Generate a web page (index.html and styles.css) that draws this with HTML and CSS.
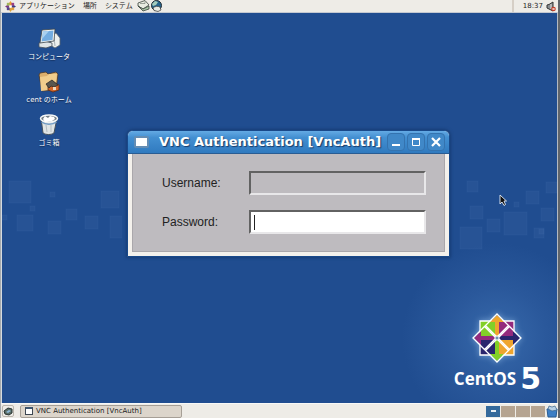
FILE: index.html
```html
<!DOCTYPE html>
<html lang="ja">
<head>
<meta charset="utf-8">
<title>CentOS 5</title>
<link rel="stylesheet" href="styles.css">
</head>
<body>
<header class="panel panel-top">
  <nav class="menus">
    <svg class="menu-logo" viewBox="0 0 12 12" aria-hidden="true">
      <path fill="#e89a31" d="M6 0l2 3-2 3-2-3z"/><path fill="#7d3b86" d="M0 6l3-2 3 2-3 2z"/>
      <path fill="#3b3b85" d="M12 6L9 4 6 6l3 2z"/><path fill="#d9a33a" d="M6 12l2-3-2-3-2 3z"/>
      <path fill="#a1b85b" d="M2 2h3v3H2z"/><path fill="#9c3e85" d="M7 2h3v3H7z"/>
      <path fill="#54468c" d="M2 7h3v3H2z"/><path fill="#e3a040" d="M7 7h3v3H7z"/>
      <circle cx="6" cy="6" r="1.5" fill="#fff"/>
    </svg>
    <button class="menu">アプリケーション</button>
    <button class="menu">場所</button>
    <button class="menu">システム</button>
  </nav>
  <button class="launcher" aria-label="Mail">
    <svg viewBox="0 0 13 12"><path d="M1 3l7-2.500 4 4.500-6 4-5-3z" fill="#e8ece2" stroke="#3b443d" stroke-width=".8"/><path d="M1 6l5 5 6-2V6L6 9z" fill="#a9c7a8" stroke="#3b443d" stroke-width=".8"/><path d="M3 3.500l5 0 0-2" fill="none" stroke="#667169" stroke-width=".6"/></svg>
  </button>
  <button class="launcher" aria-label="Web">
    <svg viewBox="0 0 13 12"><circle cx="6.500" cy="5.500" r="5" fill="#27658d" stroke="#222b31"/><path d="M2 4l3-3 3 1-2 3-3 1z" fill="#a4cbbb"/><path d="M3 8c2-2 5-2 7-1l1 3-3 1.500-4-1z" fill="#e8e9e3" stroke="#333" stroke-width=".7"/></svg>
  </button>
  <div class="status">
    <time>18:37</time>
    <svg class="volume" viewBox="0 0 10 11" role="img" aria-label="Volume muted"><path d="M1 4l2-.500L7 1v9L3 8 1 7z" fill="#8a8f92" stroke="#333"/><path d="M5 3v5" stroke="#ddd"/><circle cx="7.500" cy="8" r="2.300" fill="#c43c28"/><path d="M6.500 7l2 2m0-2l-2 2" stroke="#fff" stroke-width=".8"/></svg>
  </div>
</header>

<main class="desktop">
  <svg class="tiles tiles-left" viewBox="0 0 120 80" aria-hidden="true">
    <rect x="7" y="16" width="22" height="22"/><rect x="48" y="27" width="5" height="5"/><rect x="28" y="41" width="5" height="5"/>
    <rect x="15" y="50" width="16" height="16"/><rect x="64" y="44" width="11" height="11"/><rect x="46" y="56" width="13" height="13"/>
    <rect x="83" y="51" width="13" height="13"/><rect x="99" y="26" width="18" height="17"/><rect x="108" y="51" width="22" height="22"/><rect x="0" y="50" width="5" height="5"/>
  </svg>
  <svg class="tiles tiles-right" viewBox="0 0 100 80" aria-hidden="true">
    <rect x="10" y="3" width="11" height="11"/><rect x="69" y="13" width="13" height="13"/><rect x="89" y="4" width="11" height="11"/>
    <rect x="57" y="24" width="5" height="5"/><rect x="13" y="28" width="13" height="13"/><rect x="84" y="30" width="13" height="13"/>
    <rect x="30" y="41" width="13" height="13"/><rect x="47" y="34" width="23" height="23"/><rect x="3" y="49" width="22" height="22"/>
    <rect x="77" y="50" width="10" height="10"/><rect x="82" y="51" width="5" height="5"/>
  </svg>

  <div class="shortcuts">
    <button class="shortcut">
      <svg viewBox="0 0 24 22"><path d="M14 7l5-2 4 5v7l-5 3-5-3z" fill="#edf0ee" stroke="#596570" stroke-width=".8"/><path d="M17 9l1 9" stroke="#a9b0b4"/><path d="M2 15l6-2 7 2v3l-6 2-7-1z" fill="#dfe4e6" stroke="#46515c" stroke-width=".8"/><path d="M5 2l13-1-1 12-14 2z" fill="#f5f6f3" stroke="#3c464e" stroke-width=".8"/><path d="M6 3.500l10.500-1-1 9.500-11 1.500z" fill="#73ace0"/><path d="M6 3.500l6-.500-7 8z" fill="#a9d0ef"/></svg>
      <span>コンピュータ</span>
    </button>
    <button class="shortcut">
      <svg viewBox="0 0 24 22"><path d="M2 4l1-2 6-1 2 2 8-2 2 2-2 16-14 1z" fill="#dcae6b" stroke="#49372a" stroke-width=".8"/><path d="M3 6l7-1 2-2 8 0-2 15-14 2z" fill="#f1cd8c"/><path d="M11 14l5-3 6 3v5l-6 2-5-2z" fill="#d36629" stroke="#582b1a" stroke-width=".8"/><path d="M9 13l6-4 6 5-4 2-3-1-2 2z" fill="#59564e" stroke="#302c28" stroke-width=".8"/><path d="M16 16h3v3h-3z" fill="#f2d9bd"/></svg>
      <span>cent のホーム</span>
    </button>
    <button class="shortcut">
      <svg viewBox="0 0 24 22"><path d="M4 4l2 15c3 2 8 2 11 0l3-15z" fill="#dfe4e5" stroke="#46515c"/><ellipse cx="12" cy="4.500" rx="8.500" ry="3.500" fill="#727d84" stroke="#f5f7f7" stroke-width="1.500"/><path d="M6 5l2-3 3 2 2-2 4 1 1 2-3 2-7 1z" fill="#fff"/><path d="M4.500 8c4 3 11 3 15 0" stroke="#719bc4" stroke-width="1.500" fill="none"/><path d="M9 11l1 7m4-7v7" stroke="#b4bdc1"/></svg>
      <span>ゴミ箱</span>
    </button>
  </div>

  <section class="window" role="dialog" aria-labelledby="window-title">
    <div class="titlebar">
      <button class="window-menu" aria-label="Window menu"></button>
      <h1 id="window-title">VNC Authentication [VncAuth]</h1>
      <div class="controls">
        <button aria-label="Minimize"><svg viewBox="0 0 16 16"><path d="M4 11h8" stroke="#fff" stroke-width="2"/></svg></button>
        <button aria-label="Maximize"><svg viewBox="0 0 16 16"><path d="M4 5h8" stroke="#fff" stroke-width="2"/><path d="M4.500 5v6.500h7V5" stroke="#fff" fill="none"/></svg></button>
        <button aria-label="Close"><svg viewBox="0 0 16 16"><path d="M4 4l8 8m0-8l-8 8" stroke="#fff" stroke-width="2.200"/></svg></button>
      </div>
    </div>
    <form class="auth">
      <label for="username">Username:</label>
      <input id="username" type="text" disabled>
      <label for="password">Password:</label>
      <div class="entry"><input id="password" type="password"><i class="caret"></i></div>
    </form>
  </section>

  <div class="brand">
    <svg viewBox="0 0 50 50" aria-hidden="true">
      <g stroke="#fff" stroke-width="1.300">
        <path fill="#82cf28" d="M8 8h16v16H8z"/><path fill="#942a7d" d="M26 8h16v16H26z"/>
        <path fill="#29256d" d="M8 26h16v16H8z"/><path fill="#efa52e" d="M26 26h16v16H26z"/>
      </g>
      <path fill="#efa52e" d="M25 2l7 7h-5v15h-4V9h-5z"/><path fill="#942a7d" d="M2 25l7-7v5h15v4H9v5z"/>
      <path fill="#29256d" d="M48 25l-7-7v5H26v4h15v5z"/><path fill="#82cf28" d="M25 48l7-7h-5V26h-4v15h-5z"/>
      <g stroke="#fff" stroke-width="1.300" fill="none">
        <path d="M25 1l11.500 11.500L25 24 13.500 12.500zM25 26l11.500 11.500L25 49 13.500 37.500zM1 25l11.500-11.500L24 25 12.500 36.500zM26 25l11.500-11.500L49 25 37.500 36.500z"/>
      </g>
      <circle cx="25" cy="25" r="2" fill="#6d91b4" stroke="#fff" stroke-width=".8"/>
    </svg>
    <div class="wordmark"><span>CentOS</span><strong>5</strong></div>
  </div>

  <svg class="pointer" viewBox="0 0 8 12" aria-hidden="true"><path d="M1 1v9l2-2 2 3.500 1.500-1L5 7h2.500z" fill="#111" stroke="#e5ecf5" stroke-width=".9"/></svg>
</main>

<footer class="panel panel-bottom">
  <button class="show-desktop" aria-label="Show desktop"><svg viewBox="0 0 10 9"><path d="M1 4l4-3 4 1v4L6 8 2 7z" fill="#596e67" stroke="#293432"/><path d="M3 5l3-2 2 1-3 2z" fill="#8cb7d5"/></svg></button>
  <button class="task"><i class="task-icon"></i>VNC Authentication [VncAuth]</button>
  <div class="workspaces">
    <button class="current" aria-label="Workspace 1"></button>
    <button aria-label="Workspace 2"></button>
    <button aria-label="Workspace 3"></button>
    <button aria-label="Workspace 4"></button>
  </div>
  <button class="trash" aria-label="Trash"><svg viewBox="0 0 12 13"><path d="M1 4h10l-1 8H2z" fill="#3c7fc6" stroke="#285c94"/><path d="M2 4l1-3 3 1 3-1 2 4-5 1z" fill="#b8d0e4" stroke="#39648b" stroke-width=".7"/></svg></button>
</footer>
</body>
</html>
```
FILE: styles.css
```css
* { box-sizing: border-box; }

body {
  margin: 0;
  min-height: 100vh;
  display: flex;
  flex-direction: column;
  border-left: 1px solid #a5aaae;
  border-right: 2px solid #60656b;
  background: #eeece7;
  color: #222;
  font-family: "DejaVu Sans", "Noto Sans CJK JP", sans-serif;
}

button {
  margin: 0;
  padding: 0;
  border: 0;
  background: none;
  color: inherit;
  font: inherit;
}

svg { display: block; }

.panel {
  display: flex;
  align-items: center;
  background: #eeece7;
}

.panel-top {
  height: 13px;
  padding: 0 2px 0 4px;
  font-size: 7px;
  line-height: 12px;
  border-bottom: 1px solid #c4c9d1;
}

.menus {
  display: flex;
  align-items: center;
  gap: 8px;
  margin-right: 4px;
}

.menu-logo {
  width: 11px;
  height: 11px;
  margin-right: -5px;
}

.launcher svg {
  width: 13px;
  height: 12px;
}

.status {
  display: flex;
  align-items: center;
  gap: 3px;
  margin-left: auto;
  padding-left: 9px;
  border-left: 2px solid #d6cfc6;
}

.volume {
  width: 10px;
  height: 11px;
}

.desktop {
  position: relative;
  flex: 1;
  overflow: hidden;
  border-left: 1px solid #d5dbe0;
  border-right: 1px solid #b4bac2;
  background:
    radial-gradient(circle at calc(100% - 60px) calc(100% - 65px), #386aac 0, #2a589b 50px, transparent 95px),
    #204d90;
}

.tiles {
  position: absolute;
  height: 80px;
  fill: rgba(90, 135, 190, .12);
  stroke: rgba(110, 150, 200, .08);
}

.tiles-left { top: 152px; left: 0; width: 120px; }
.tiles-right { top: 165px; right: 0; width: 100px; }

.shortcuts {
  display: flex;
  flex-direction: column;
  gap: 8px;
  width: 80px;
  margin: 15px 0 0 7px;
}

.shortcut {
  display: flex;
  flex-direction: column;
  align-items: center;
  gap: 2px;
  color: #fff;
  font-size: 7px;
  line-height: 11px;
  text-shadow: 0 1px 1px #10264b;
}

.shortcut svg {
  width: 24px;
  height: 22px;
}

.window {
  position: absolute;
  top: 117px;
  left: 125px;
  width: 323px;
  border: 1px solid #19498a;
  border-radius: 6px 6px 0 0;
  background: #f4f1ec;
  box-shadow: 0 0 3px 1px #173d76;
}

.titlebar {
  display: flex;
  align-items: center;
  height: 23px;
  padding: 0 4px 0 6px;
  border-radius: 5px 5px 0 0;
  border-bottom: 1px solid #295c93;
  background: linear-gradient(#64aae4 0, #438fd1 30%, #307abf 100%);
}

.window-menu {
  width: 15px;
  height: 12px;
  border: 2px solid #648db4;
  border-radius: 2px;
  background: #fff;
}

.titlebar h1 {
  flex: 1;
  margin: 0 0 0 10px;
  color: #fff;
  font-size: 13px;
  line-height: 20px;
  white-space: nowrap;
  text-shadow: 1px 1px 1px #183b68;
}

.controls {
  display: flex;
  gap: 2px;
}

.controls button {
  width: 18px;
  height: 18px;
  border: 1px solid #3473af;
  border-radius: 4px;
  background: #4088c8;
}

.controls svg {
  width: 16px;
  height: 16px;
}

.auth {
  display: grid;
  grid-template-columns: 75px 1fr;
  align-items: center;
  gap: 15px 12px;
  margin: 0 4px 4px;
  padding: 17px 18px 17px 29px;
  border: 1px solid #aaa7ab;
  border-top: 0;
  background: #bebbbf;
  font-family: "Liberation Sans", Arial, sans-serif;
  font-size: 12px;
}

.auth input {
  display: block;
  width: 100%;
  height: 24px;
  margin: 0;
  padding: 0 6px;
  border: 2px solid;
  border-color: #626262 #e8e7e9 #e8e7e9 #626262;
  border-radius: 0;
  outline: 0;
  background: #fff;
  font: inherit;
}

.auth input:disabled { background: #bebbbf; }

.entry { position: relative; }

.caret {
  position: absolute;
  top: 5px;
  left: 5px;
  width: 1px;
  height: 15px;
  background: #222;
}

.brand {
  position: absolute;
  right: 16px;
  bottom: 12px;
  display: flex;
  flex-direction: column;
  align-items: center;
  gap: 4px;
  color: #fff;
}

.brand svg {
  width: 50px;
  height: 50px;
  filter: drop-shadow(0 0 3px #75a0d1);
}

.wordmark {
  display: flex;
  align-items: center;
  gap: 4px;
  font: 700 17px/24px "Open Sans", sans-serif;
}

.wordmark strong {
  font: bold 30px/24px "DejaVu Sans", sans-serif;
}

.pointer {
  position: absolute;
  top: 181px;
  right: 50px;
  width: 8px;
  height: 12px;
}

.panel-bottom {
  height: 15px;
  gap: 6px;
  padding-left: 1px;
  border-top: 1px solid #f8f8f6;
}

.show-desktop {
  display: grid;
  place-items: center;
  width: 12px;
  height: 12px;
  border: 1px solid #bbb6ad;
  border-radius: 2px;
}

.show-desktop svg {
  width: 10px;
  height: 9px;
}

.task {
  display: flex;
  align-items: center;
  gap: 3px;
  width: 162px;
  height: 13px;
  padding-left: 4px;
  border: 1px solid #a69f96;
  border-radius: 2px;
  background: #dcd5cb;
  font-size: 7px;
  line-height: 11px;
  white-space: nowrap;
}

.task-icon {
  width: 8px;
  height: 8px;
  border: 1px solid #3d4752;
  border-top: 2px solid #3e5671;
  background: #fff;
}

.workspaces {
  display: flex;
  gap: 1px;
  margin-left: auto;
  margin-right: -5px;
}

.workspaces button {
  display: grid;
  place-items: center;
  width: 14px;
  height: 11px;
  background: #b5a491;
}

.workspaces .current { background: #34699b; }

.workspaces .current::before {
  content: "";
  width: 5px;
  height: 2px;
  background: #e7edf2;
}

.trash svg {
  width: 12px;
  height: 13px;
}
```
